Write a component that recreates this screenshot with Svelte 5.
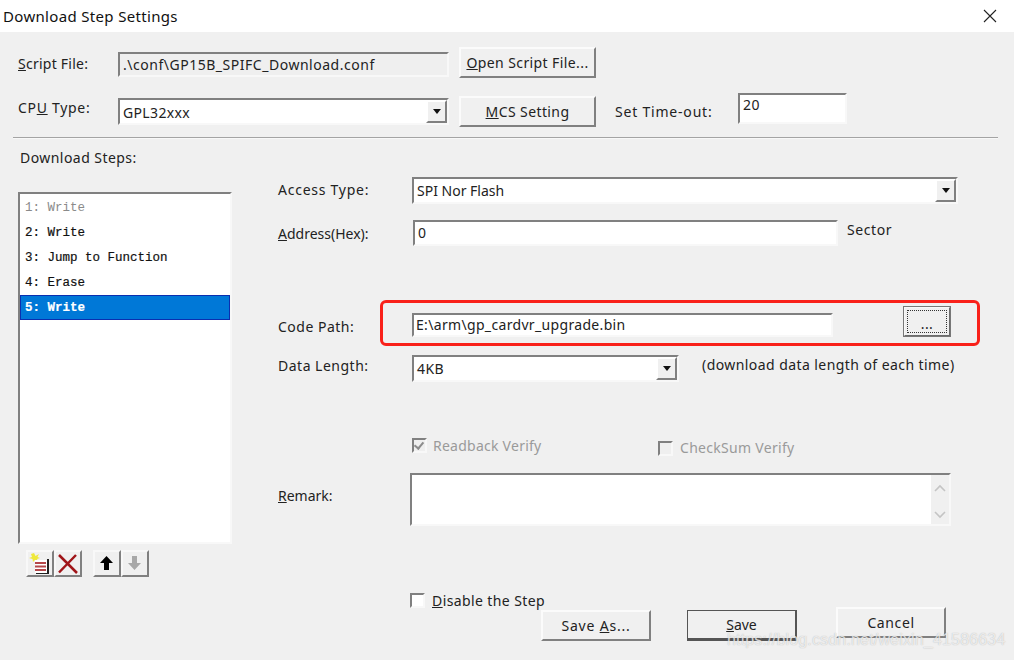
<script lang="ts">
	const steps = [
		{ label: '1: Write', state: 'off' },
		{ label: '2: Write', state: '' },
		{ label: '3: Jump to Function', state: '' },
		{ label: '4: Erase', state: '' },
		{ label: '5: Write', state: 'sel' }
	];
</script>

<div class="dialog">
	<header class="titlebar">
		<span>Download Step Settings</span>
		<svg class="close" width="14" height="14" viewBox="0 0 14 14">
			<path d="M1 1L13 13M13 1L1 13" stroke="#222" stroke-width="1.1" fill="none" />
		</svg>
	</header>

	<div class="body">
		<div class="row row-script">
			<span class="lbl lbl-top lbl-script"><u>S</u>cript File:</span>
			<div class="field field-ro">.\conf\GP15B_SPIFC_Download.conf</div>
			<button class="btn btn-top"><u>O</u>pen Script File...</button>
		</div>
		<div class="row row-cpu">
			<span class="lbl lbl-top lbl-cpu">CP<u>U</u> Type:</span>
			<div class="field combo combo-cpu">
				<span>GPL32xxx</span>
				<i class="arrow"></i>
			</div>
			<button class="btn btn-top btn-mcs"><u>M</u>CS Setting</button>
			<span class="lbl lbl-timeout">Set Time-out:</span>
			<div class="field field-timeout">20</div>
		</div>
		<div class="divider"></div>
		<div class="steps-title">Download Steps:</div>

		<div class="main">
			<div class="left">
				<ul class="list">
					{#each steps as step}
						<li class={step.state}>{step.label}</li>
					{/each}
				</ul>
				<div class="toolbar">
					<button class="tool">
						<svg width="24" height="24" viewBox="0 0 24 24">
							<path d="M6 1l1.5 3L11 2 9.5 5l2.500 1-3 1 1 2.500-3-1.500-2 2-.5-3L1 6l3-1-1-3z" fill="#efe93c" />
							<path d="M7 8h12v13H7z" fill="#fff" />
							<path d="M19 7h2v15H8v-1h11z" fill="#222" />
							<path d="M7 10h11v2H7zM7 13.500h11v2H7zM7 17h11v2H7z" fill="#b5474a" />
						</svg>
					</button>
					<button class="tool">
						<svg width="24" height="24" viewBox="0 0 24 24">
							<path d="M3 3L21 21M20 3L3 20.500" stroke="#a01519" stroke-width="2.500" fill="none" />
						</svg>
					</button>
					<button class="tool tool-gap">
						<svg width="24" height="24" viewBox="0 0 24 24">
							<path d="M11.500 4l6.500 7h-4v7H9v-7H5z" fill="#000" />
						</svg>
					</button>
					<button class="tool">
						<svg width="24" height="24" viewBox="0 0 24 24">
							<path d="M11.500 18l6.500-7h-4V4H9v7H5z" fill="#a8a8a8" />
						</svg>
					</button>
				</div>
			</div>

			<div class="right">
				<div class="row row-access">
					<span class="lbl lbl-form lbl-access">Access Type:</span>
					<div class="field combo combo-access">
						<span>SPI Nor Flash</span>
						<i class="arrow"></i>
					</div>
				</div>
				<div class="row row-address">
					<span class="lbl lbl-form lbl-address"><u>A</u>ddress(Hex):</span>
					<div class="field field-address">0</div>
					<span class="lbl lbl-sector">Sector</span>
				</div>
				<div class="row row-code">
					<span class="lbl lbl-form lbl-code">Code Path:</span>
					<div class="field field-code">E:\arm\gp_cardvr_upgrade.bin</div>
					<button class="btn btn-browse"><span>...</span></button>
					<div class="highlight"></div>
				</div>
				<div class="row row-length">
					<span class="lbl lbl-form lbl-length">Data Length:</span>
					<div class="field combo combo-length">
						<span>4KB</span>
						<i class="arrow"></i>
					</div>
					<span class="lbl lbl-hint">(download data length of each time)</span>
				</div>
				<div class="row row-verify">
					<span class="check check-on"></span>
					<span class="lbl lbl-off lbl-readback">Readback Verify</span>
					<span class="check check-sum"></span>
					<span class="lbl lbl-off lbl-checksum">CheckSum Verify</span>
				</div>
				<div class="row row-remark">
					<span class="lbl lbl-remark"><u>R</u>emark:</span>
					<div class="field remark">
						<div class="spin">
							<svg width="14" height="10" viewBox="0 0 14 10"><path d="M2 8l5-5 5 5" stroke="#c4c4c4" stroke-width="1.6" fill="none" /></svg>
							<svg width="14" height="10" viewBox="0 0 14 10"><path d="M2 2l5 5 5-5" stroke="#c4c4c4" stroke-width="1.6" fill="none" /></svg>
						</div>
					</div>
				</div>
				<div class="row row-disable">
					<span class="check"></span>
					<span class="lbl lbl-disable"><u>D</u>isable the Step</span>
				</div>
				<div class="row row-actions">
					<button class="btn btn-action btn-saveas">Save <u>A</u>s...</button>
					<button class="btn btn-action btn-save"><u>S</u>ave</button>
					<button class="btn btn-action btn-cancel">Cancel</button>
				</div>
			</div>
		</div>
	</div>
	<div class="watermark">https://blog.csdn.net/weixin_41586634</div>
</div>

<style>
	:global(body) {
		margin: 0;
		background: #f0f0f0;
	}
	.dialog {
		position: relative;
		width: 1014px;
		height: 660px;
		overflow: hidden;
		font-family: 'Noto Sans', sans-serif;
		font-size: 14px;
		letter-spacing: 0.4px;
		color: #222;
	}
	.titlebar {
		display: flex;
		align-items: center;
		justify-content: space-between;
		height: 32px;
		padding: 0 17px 0 3px;
		background: #fff;
		color: #111;
		font-size: 15px;
		letter-spacing: 0.33px;
	}
	.body {
		padding-top: 15px;
	}
	.row {
		display: flex;
		align-items: flex-start;
		position: relative;
	}
	.lbl {
		white-space: nowrap;
		line-height: 20px;
	}
	.field {
		box-sizing: border-box;
		background: #fff;
		border: 2px solid;
		border-color: #808080 #f8f8f8 #f8f8f8 #808080;
		padding-left: 3px;
		white-space: nowrap;
		line-height: 20px;
	}
	.combo {
		display: flex;
		justify-content: space-between;
	}
	.arrow {
		box-sizing: border-box;
		width: 21px;
		margin: 0 0 0 auto;
		background: #f0f0f0;
		border: 2px solid;
		border-color: #fff #808080 #808080 #fff;
		display: flex;
		align-items: center;
		justify-content: center;
	}
	.arrow::before {
		content: '';
		border: 4px solid transparent;
		border-top: 5px solid #111;
		border-bottom: 0;
	}
	.btn {
		box-sizing: border-box;
		background: #f0f0f0;
		border: 2px solid;
		border-color: #fbfbfb #808080 #808080 #fbfbfb;
		font: inherit;
		letter-spacing: inherit;
		color: inherit;
		padding: 0;
	}

	.row-script {
		padding-left: 18px;
	}
	.lbl-top {
		width: 100px;
		padding-top: 7px;
	}
	.lbl-script {
		letter-spacing: 0.25px;
	}
	.field-ro {
		width: 331px;
		height: 25px;
		margin-top: 5px;
		padding-top: 1px;
		background: #efefef;
		letter-spacing: 0.52px;
	}
	.btn-top {
		width: 137px;
		height: 31px;
		margin-left: 10px;
	}

	.row-cpu {
		padding-left: 18px;
		margin-top: 15px;
	}
	.lbl-cpu {
		padding-top: 5px;
		letter-spacing: 0.7px;
	}
	.combo-cpu {
		width: 331px;
		height: 27px;
		margin-top: 5px;
		letter-spacing: 0.35px;
	}
	.combo-cpu span {
		padding-top: 3px;
	}
	.btn-mcs {
		margin-top: 3px;
	}
	.lbl-timeout {
		margin: 9px 0 0 19px;
		width: 123px;
		letter-spacing: 0.8px;
	}
	.field-timeout {
		width: 109px;
		height: 31px;
		padding: 0 0 0 3px;
	}

	.divider {
		height: 1px;
		margin: 10px 16px 0 13px;
		background: #a4a4a4;
		border-bottom: 1px solid #f8f8f8;
	}
	.steps-title {
		margin: 9px 0 0 20px;
		line-height: 20px;
		letter-spacing: 0.45px;
	}

	.main {
		display: flex;
		align-items: flex-start;
	}
	.left {
		width: 214px;
		margin: 24px 0 0 18px;
	}
	.list {
		box-sizing: border-box;
		height: 352px;
		margin: 0;
		padding: 1px 0 0;
		list-style: none;
		background: #fff;
		border: 2px solid;
		border-color: #808080 #f8f8f8 #f8f8f8 #808080;
		font-family: 'Liberation Mono', monospace;
		font-size: 12.5px;
		letter-spacing: 0;
		color: #111;
		-webkit-text-stroke: 0.2px currentColor;
	}
	.list li {
		box-sizing: border-box;
		height: 25px;
		line-height: 25px;
		padding: 1px 0 0 5px;
	}
	.list li.off {
		color: #8a8a8a;
		-webkit-text-stroke: 0;
	}
	.list li.sel {
		background: #0078d7;
		color: #fff;
		font-weight: bold;
		border: 1px solid #0a2fb0;
		padding-left: 4px;
		line-height: 23px;
	}
	.toolbar {
		display: flex;
		margin: 6px 0 0 8px;
	}
	.tool {
		box-sizing: border-box;
		width: 28px;
		height: 27px;
		padding: 0;
		display: flex;
		align-items: center;
		justify-content: center;
		background: #f0f0f0;
		border: 2px solid;
		border-color: #f8f8f8 #808080 #808080 #f8f8f8;
	}
	.tool-gap {
		margin-left: 11px;
	}

	.right {
		width: 720px;
		margin: 9px 0 0 46px;
	}
	.lbl-form {
		width: 134px;
		padding-top: 3px;
	}
	.lbl-access {
		letter-spacing: 0.75px;
	}
	.combo-access {
		width: 546px;
		height: 27px;
		letter-spacing: 0;
	}
	.combo-access span,
	.combo-length span {
		padding-top: 2px;
	}
	.row-address {
		margin-top: 16px;
	}
	.field-address {
		width: 425px;
		height: 26px;
		margin-left: 1px;
		padding-top: 1px;
	}
	.lbl-address {
		padding-top: 4px;
		letter-spacing: 0;
	}
	.lbl-sector {
		margin: 0 0 0 9px;
		letter-spacing: 0.6px;
	}
	.row-code {
		margin-top: 60px;
	}
	.lbl-code {
		padding-top: 11px;
		letter-spacing: 0.5px;
	}
	.field-code {
		width: 421px;
		height: 24px;
		margin-top: 7px;
		padding-left: 2px;
		letter-spacing: 0.33px;
	}
	.btn-browse {
		width: 48px;
		height: 31px;
		margin-left: 70px;
		padding: 2px;
		border-color: #f8f8f8 #6c6c6c #6c6c6c #f8f8f8;
		outline: 1px solid #777;
		outline-offset: -1px;
	}
	.btn-browse span {
		display: block;
		height: 100%;
		line-height: 26px;
		box-sizing: border-box;
		border: 1px dotted #333;
	}
	.highlight {
		position: absolute;
		left: 102px;
		top: -6px;
		width: 600px;
		height: 46px;
		box-sizing: border-box;
		border: 3px solid #f9211a;
		border-radius: 6px;
	}
	.row-length {
		margin-top: 18px;
	}
	.lbl-length {
		padding-top: 1px;
		letter-spacing: 0.5px;
	}
	.combo-length {
		width: 267px;
		height: 27px;
	}
	.lbl-hint {
		margin: 0 0 0 23px;
		letter-spacing: 0.43px;
	}
	.row-verify {
		margin-top: 56px;
		height: 18px;
		margin-left: 134px;
	}
	.check {
		box-sizing: border-box;
		width: 15px;
		height: 15px;
		background: #fff;
		border: 2px solid;
		border-color: #808080 #f8f8f8 #f8f8f8 #808080;
		flex: none;
	}
	.check-on {
		background: #efefef;
		position: relative;
	}
	.check-on::after {
		content: '';
		position: absolute;
		left: 2px;
		top: 0;
		width: 4px;
		height: 7px;
		border: solid #8c8c8c;
		border-width: 0 2px 2px 0;
		transform: rotate(40deg);
	}
	.check-sum {
		margin: 3px 0 0 225px;
		background: #efefef;
	}
	.lbl-off {
		color: #9a9a9a;
	}
	.lbl-readback {
		margin: -2px 0 0 6px;
		width: 0;
		letter-spacing: 0.25px;
	}
	.lbl-checksum {
		margin: 0 0 0 7px;
		letter-spacing: 0.3px;
	}
	.row-remark {
		margin-top: 17px;
	}
	.lbl-remark {
		width: 132px;
		padding-top: 13px;
		letter-spacing: 0;
	}
	.remark {
		display: flex;
		justify-content: flex-end;
		width: 541px;
		height: 53px;
		padding: 0;
	}
	.spin {
		display: flex;
		flex-direction: column;
		justify-content: space-between;
		width: 18px;
		padding: 8px 0 4px;
		box-sizing: border-box;
		background: #f0f0f0;
		align-items: center;
	}
	.row-disable {
		margin: 67px 0 0 132px;
		height: 14px;
	}
	.lbl-disable {
		margin: -2px 0 0 7px;
	}
	.row-actions {
		margin-left: 263px;
	}
	.btn-action {
		width: 110px;
		height: 31px;
		margin-top: 3px;
		letter-spacing: 0;
	}
	.btn-saveas {
		letter-spacing: 0.8px;
	}
	.btn-save {
		margin-left: 36px;
		border-color: #555;
		border-width: 1px 2px 3px 1px;
	}
	.btn-cancel {
		margin: 0 0 0 39px;
		letter-spacing: 0.6px;
	}
	.watermark {
		position: absolute;
		left: 727px;
		top: 631px;
		font-family: 'Liberation Sans', sans-serif;
		font-size: 16px;
		letter-spacing: 0.17px;
		color: rgba(255, 255, 255, 0.72);
		text-shadow: 0 0 1px rgba(120, 120, 120, 0.55);
		white-space: nowrap;
	}
</style>
